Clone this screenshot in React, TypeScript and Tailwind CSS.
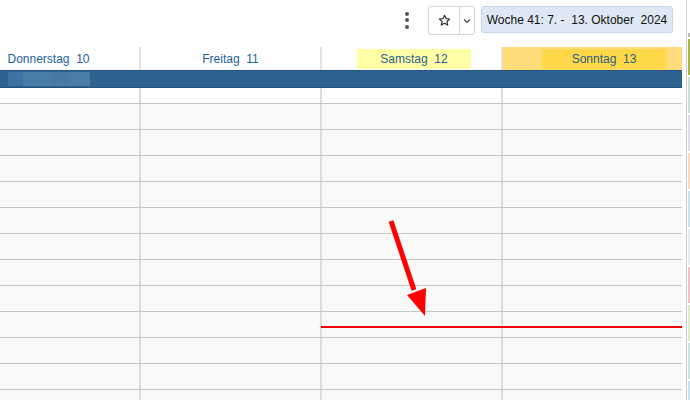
import React from "react";

const strips = [
  "#a9b746",
  "#cfe0dc",
  "#dedde9",
  "#f7d9c4",
  "#cde0ec",
  "#e9edef",
  "#efc3c3",
  "#dfe9cc",
  "#cbe2de",
  "#c9e1ee",
];

function Row({ first }: { first?: boolean }) {
  const cols = ["w-[139px]", "w-[181px]", "w-[181px]", "w-[181px]"];
  return (
    <div
      className={
        first
          ? "flex shrink-0 h-[15px] bg-white"
          : "flex shrink-0 h-[26px] bg-[#f9f9f9] border-t border-[#c6c6c6]"
      }
    >
      {cols.map((c, i) => (
        <div
          key={i}
          className={`${c} h-full ${i > 0 ? "border-l-2 border-[#dcdcdc]" : ""}`}
        />
      ))}
    </div>
  );
}

export default function App() {
  return (
    <div
      className="relative w-[690px] h-[400px] overflow-hidden bg-white flex"
      style={{ fontFamily: '"Liberation Sans", Arial, sans-serif' }}
    >
      <div className="w-[682px] shrink-0 flex flex-col">
        {/* top bar */}
        <div className="h-[47px] shrink-0 flex items-start pt-[6px] justify-end pr-[9px]">
          <div className="w-[14px] h-[28px] flex flex-col items-center justify-center gap-[2.5px] mr-[14px]">
            <span className="w-[4px] h-[4px] rounded-full bg-[#555]" />
            <span className="w-[4px] h-[4px] rounded-full bg-[#555]" />
            <span className="w-[4px] h-[4px] rounded-full bg-[#555]" />
          </div>
          <div className="flex h-[29px] border border-[#d4d4d4] rounded-[3px] bg-white mr-[6px]">
            <div className="w-[31px] flex items-center justify-center border-r border-[#d4d4d4]">
              <svg width="13" height="13" viewBox="0 0 24 24" fill="none" stroke="#333" strokeWidth="2.2" strokeLinejoin="round">
                <path d="M12 2.5l2.9 6.2 6.6.7-5 4.5 1.4 6.6L12 17.2l-5.9 3.3 1.4-6.6-5-4.5 6.6-.7z" />
              </svg>
            </div>
            <div className="w-[14px] flex items-center justify-center">
              <svg width="8" height="6" viewBox="0 0 8 6" fill="none" stroke="#444" strokeWidth="1.2">
                <path d="M1 1.5l3 3 3-3" />
              </svg>
            </div>
          </div>
          <div className="h-[27px] w-[192px] flex items-center justify-center bg-[#dde8f4] border border-[#c7d6e6] rounded-[3px] text-[12px] text-[#111] whitespace-pre">
            {"Woche 41: 7. -  13. Oktober  2024"}
          </div>
        </div>
        {/* header */}
        <div className="flex shrink-0 h-[23px] text-[12px] text-[#1d5fa3]">
          <div className="w-[139px] relative overflow-hidden">
            <div className="absolute left-[-42px] w-[181px] h-full flex items-center justify-center whitespace-pre">
              {"Donnerstag  10"}
            </div>
          </div>
          <div className="w-[181px] border-l-2 border-[#e2e2e2] flex items-center justify-center whitespace-pre">
            {"Freitag  11"}
          </div>
          <div className="w-[181px] border-l-2 border-[#e2e2e2] flex items-center justify-center">
            <div className="ml-[35px] mr-[30px] flex-1 h-[20px] bg-[#ffffa6] flex items-center justify-center whitespace-pre text-[#2b6190]">
              {"Samstag  12"}
            </div>
          </div>
          <div className="w-[181px] border-l-2 border-[#e2e2e2] bg-[#ffdc78] flex items-center">
            <div className="ml-[39px] mr-[16px] flex-1 h-[20px] bg-[#ffd84a] flex items-center justify-center whitespace-pre text-[#2d5e7c]">
              {"Sonntag  13"}
            </div>
          </div>
        </div>
        {/* blue bar */}
        <div className="h-[18px] shrink-0 bg-[#2d6291] border-y border-[#24517a] flex items-center">
          <div className="ml-[8px] w-[15px] h-[14px] bg-[#3f72a2]" />
          <div className="w-[30px] h-[14px] bg-[#4a7ca8]" />
          <div className="w-[15px] h-[14px] bg-[#4878a4]" />
          <div className="w-[22px] h-[14px] bg-[#4c7da9]" />
        </div>
        {/* body */}
        <div className="flex flex-col shrink-0">
          <Row first />
          {Array.from({ length: 12 }).map((_, i) => (
            <Row key={i} />
          ))}
        </div>
      </div>
      {/* right side */}
      <div className="w-[4px] shrink-0" />
      <div className="w-[1px] shrink-0 h-full bg-[#cfcfcf]" />
      <div className="w-[1px] shrink-0" />
      <div className="w-[2px] shrink-0 flex flex-col pt-[33px] gap-[2px]">
        <div className="h-[4px] shrink-0 bg-[#bbbbbb]" />
        {strips.map((c, i) => (
          <div key={i} className="h-[36px] shrink-0" style={{ backgroundColor: c }} />
        ))}
      </div>

      {/* current time line */}
      <div className="absolute left-[321px] top-[326px] w-[361px] h-[2px] bg-[#ff0000]" />

      {/* arrow */}
      <svg className="absolute left-0 top-0" width="690" height="400" viewBox="0 0 690 400">
        <line x1="391" y1="221" x2="414" y2="290" stroke="#ff0000" strokeWidth="5" />
        <polygon points="407,295 426,288 425,316" fill="#ff0000" />
      </svg>
    </div>
  );
}
